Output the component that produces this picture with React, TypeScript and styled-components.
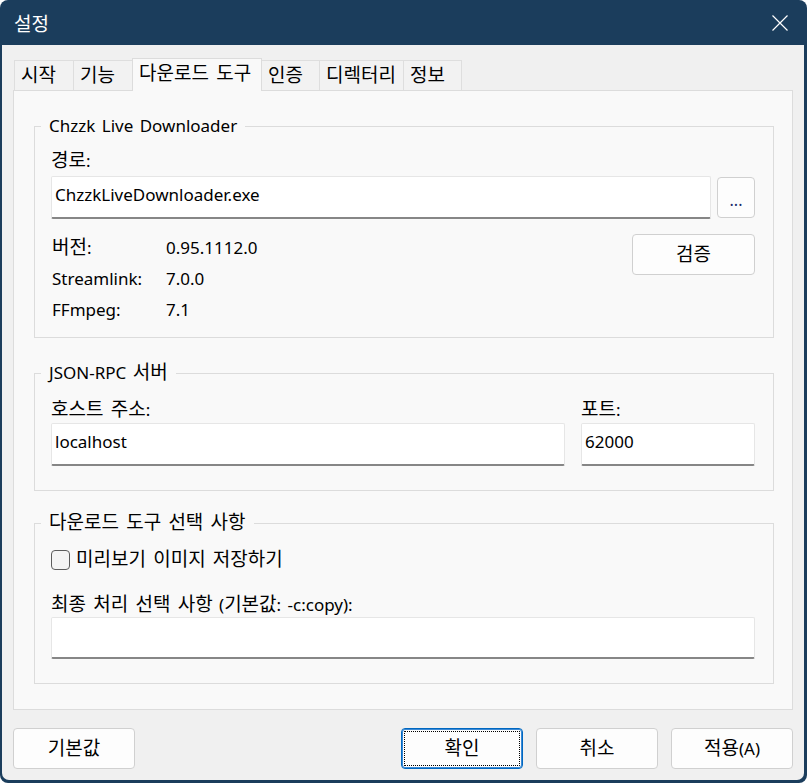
import React from "react";
import styled, { createGlobalStyle, css } from "styled-components";

const FONT = `"Noto Sans", "Noto Sans CJK KR", sans-serif`;

const GlobalStyle = createGlobalStyle`
  html, body { margin: 0; padding: 0; background: #ffffff; }
  body { font-family: ${FONT}; }
  *, *::before, *::after { box-sizing: border-box; }
`;

/* Korean runs are set a touch larger than Latin runs, as Malgun Gothic does next to Segoe UI */
const Hangul = styled.span`
  font-family: "Noto Sans CJK KR", sans-serif;
  font-size: 19px;
  word-spacing: 3px;
  line-height: 0;
`;

const HANGUL_RUN = /([\u3131-\u318e\uac00-\ud7a3]+(?: +[\u3131-\u318e\uac00-\ud7a3]+)*)/;

function T({ children }: { children: string }) {
  const parts = children.split(HANGUL_RUN);
  return (
    <>
      {parts.map((p, i) => (i % 2 === 1 ? <Hangul key={i}>{p}</Hangul> : p))}
    </>
  );
}

const Window = styled.div`
  width: 807px;
  height: 783px;
  background: #1b3d5c;
  border-radius: 8px;
  display: flex;
  flex-direction: column;
  overflow: hidden;
  font-family: ${FONT};
  font-size: 17px;
  word-spacing: 2px;
  color: #000;
`;

const TitleBar = styled.div`
  height: 45px;
  flex: none;
  display: flex;
  align-items: center;
  justify-content: space-between;
  padding: 0 19px 0 14px;
  color: #ffffff;
`;

const Title = styled.span`
  font-family: "Noto Sans CJK KR", sans-serif;
  font-size: 19px;
  line-height: 24px;
`;

const CloseButton = styled.div`
  width: 16px;
  height: 16px;
  display: flex;
  align-items: center;
  justify-content: center;
`;

const Body = styled.div`
  flex: 1;
  margin: 0 3px 3px 2px;
  background: #f0f0f0;
  border-radius: 0 0 7px 7px;
  display: flex;
  flex-direction: column;
  padding: 13px 11px 11px;
`;

const TabStrip = styled.div`
  display: flex;
  align-items: flex-end;
  height: 33px;
  padding-left: 1px;
  margin-bottom: -1px;
  position: relative;
  z-index: 1;
`;

const Tab = styled.div<{ $w: number; $active?: boolean }>`
  width: ${(p) => p.$w}px;
  height: 30px;
  margin-bottom: 1px;
  margin-left: -1px;
  padding-left: 6px;
  display: flex;
  align-items: center;
  white-space: nowrap;
  background: #f2f2f2;
  border: 1px solid #dedede;
  border-bottom: none;
  line-height: 24px;
  &:first-child { margin-left: 0; }
  ${(p) =>
    p.$active &&
    css`
      height: 33px;
      margin-bottom: 0;
      background: #f9f9f9;
      border-color: #dcdcdc;
      position: relative;
      z-index: 2;
      padding-bottom: 2px;
    `}
`;

const TabLabel = styled.span`
  white-space: nowrap;
`;

const Panel = styled.div`
  flex: 1;
  background: #f9f9f9;
  border: 1px solid #dcdcdc;
  padding: 23px 18px 0 20px;
  display: flex;
  flex-direction: column;
`;

const Group = styled.fieldset<{ $mt?: number }>`
  margin: ${(p) => p.$mt ?? 0}px 0 0;
  padding: 0;
  border: 1px solid #dcdcdc;
  min-width: 0;
`;

const Legend = styled.legend`
  margin-left: 6px;
  padding: 0 8px;
  line-height: 24px;
`;

const GroupContent = styled.div<{ $pt: number; $pb: number }>`
  padding: ${(p) => p.$pt}px 18px ${(p) => p.$pb}px 16px;
  display: flex;
  flex-direction: column;
`;

const Label = styled.div<{ $mt?: number }>`
  line-height: 24px;
  margin-top: ${(p) => p.$mt ?? 0}px;
  white-space: nowrap;
`;

const PathRow = styled.div`
  display: flex;
  align-items: center;
  gap: 6px;
  margin-top: 3px;
`;

const TextBox = styled.input`
  flex: 1;
  min-width: 0;
  width: 100%;
  height: 43px;
  padding: 5px 3px 11px;
  font: inherit;
  word-spacing: inherit;
  color: #000;
  background: #ffffff;
  border: 1px solid #e6e6e6;
  border-bottom: 2px solid #868686;
  border-radius: 2px;
  outline: none;
`;

const Button = styled.button<{ $w: number; $focused?: boolean }>`
  width: ${(p) => p.$w}px;
  height: 41px;
  flex: none;
  font: inherit;
  word-spacing: inherit;
  line-height: 24px;
  color: #000;
  background: #fdfdfd;
  border: 1px solid #d0d0d0;
  border-radius: 4px;
  padding: 0;
  display: flex;
  align-items: center;
  justify-content: center;
  ${(p) =>
    p.$focused &&
    css`
      border-color: #0067c0;
      box-shadow: inset 0 0 0 1px #3b8ad6;
      outline: 1px dotted #000;
      outline-offset: -4px;
    `}
`;

const ButtonLabel = styled.span`
  white-space: nowrap;
`;

const DotsText = styled.span`
  padding-top: 4px;
  font-size: 16px;
  color: #1a2a6a;
`;

const InfoArea = styled.div`
  display: flex;
  justify-content: space-between;
  align-items: flex-start;
  margin-top: 13px;
`;

const InfoGrid = styled.div`
  display: grid;
  grid-template-columns: 114px auto;
  grid-auto-rows: 31px;
  align-items: center;
  padding-left: 1px;
  line-height: 24px;
`;

const VerifyWrap = styled.div`
  padding-top: 2px;
`;

const ServerGrid = styled.div`
  display: grid;
  grid-template-columns: 1fr 174px;
  column-gap: 16px;
  row-gap: 1px;
`;

const CheckRow = styled.label`
  display: flex;
  align-items: center;
  gap: 6px;
  line-height: 24px;
`;

const CheckBox = styled.span`
  width: 19px;
  height: 20px;
  border: 1px solid #5c5c5c;
  border-radius: 4px;
  background: #f4f4f4;
  flex: none;
`;

const Footer = styled.div`
  display: flex;
  gap: 13px;
  margin-top: 18px;
`;

const Spacer = styled.div`
  flex: 1;
`;

type TabDef = { label: string; w: number; active?: boolean };
const tabs: TabDef[] = [
  { label: "시작", w: 60 },
  { label: "기능", w: 60 },
  { label: "다운로드 도구", w: 130, active: true },
  { label: "인증", w: 59 },
  { label: "디렉터리", w: 85 },
  { label: "정보", w: 59 },
];

const info: [string, string][] = [
  ["버전:", "0.95.1112.0"],
  ["Streamlink:", "7.0.0"],
  ["FFmpeg:", "7.1"],
];

const footerButtons = ["확인", "취소", "적용(A)"];

export default function App() {
  return (
    <>
      <GlobalStyle />
      <Window>
        <TitleBar>
          <Title>설정</Title>
          <CloseButton>
            <svg width="16" height="16" viewBox="0 0 16 16">
              <path d="M0.5 0.5 L15.5 15.5 M15.5 0.5 L0.5 15.5" stroke="#ffffff" strokeWidth="1.2" fill="none" />
            </svg>
          </CloseButton>
        </TitleBar>
        <Body>
          <TabStrip>
            {tabs.map((t) => (
              <Tab key={t.label} $w={t.w} $active={t.active}>
                <TabLabel>
                  <T>{t.label}</T>
                </TabLabel>
              </Tab>
            ))}
          </TabStrip>
          <Panel>
            <Group>
              <Legend>Chzzk Live Downloader</Legend>
              <GroupContent $pt={11} $pb={12}>
                <Label>
                  <T>경로:</T>
                </Label>
                <PathRow>
                  <TextBox readOnly value="ChzzkLiveDownloader.exe" />
                  <Button $w={38}>
                    <DotsText>...</DotsText>
                  </Button>
                </PathRow>
                <InfoArea>
                  <InfoGrid>
                    {info.map(([k, v]) => (
                      <React.Fragment key={k}>
                        <span>
                          <T>{k}</T>
                        </span>
                        <span>{v}</span>
                      </React.Fragment>
                    ))}
                  </InfoGrid>
                  <VerifyWrap>
                    <Button $w={123}>
                      <ButtonLabel>
                        <T>검증</T>
                      </ButtonLabel>
                    </Button>
                  </VerifyWrap>
                </InfoArea>
              </GroupContent>
            </Group>
            <Group $mt={23}>
              <Legend>
                <T>JSON-RPC 서버</T>
              </Legend>
              <GroupContent $pt={13} $pb={24}>
                <ServerGrid>
                  <Label>
                    <T>호스트 주소:</T>
                  </Label>
                  <Label>
                    <T>포트:</T>
                  </Label>
                  <TextBox readOnly value="localhost" />
                  <TextBox readOnly value="62000" />
                </ServerGrid>
              </GroupContent>
            </Group>
            <Group $mt={20}>
              <Legend>
                <T>다운로드 도구 선택 사항</T>
              </Legend>
              <GroupContent $pt={13} $pb={24}>
                <CheckRow>
                  <CheckBox />
                  <span>
                    <T>미리보기 이미지 저장하기</T>
                  </span>
                </CheckRow>
                <Label $mt={21}>
                  <T>최종 처리 선택 사항 (기본값: -c:copy):</T>
                </Label>
                <TextBox readOnly value="" />
              </GroupContent>
            </Group>
          </Panel>
          <Footer>
            <Button $w={122}>
              <ButtonLabel>
                <T>기본값</T>
              </ButtonLabel>
            </Button>
            <Spacer />
            {footerButtons.map((b, i) => (
              <Button key={b} $w={122} $focused={i === 0}>
                <ButtonLabel>
                  <T>{b}</T>
                </ButtonLabel>
              </Button>
            ))}
          </Footer>
        </Body>
      </Window>
    </>
  );
}
